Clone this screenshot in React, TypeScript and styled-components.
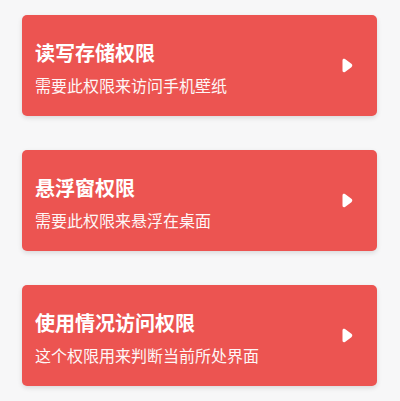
import styled, { createGlobalStyle } from "styled-components";

const GlobalStyle = createGlobalStyle`
    html, body {
        margin: 0;
        padding: 0;
        background: #f7f7f8;
        font-family: "Noto Sans CJK SC", "Noto Sans", sans-serif;
    }
`;

const Page = styled.div`
    width: 400px;
    min-height: 401px;
    box-sizing: border-box;
    padding: 15px 23px 0 22px;
    display: flex;
    flex-direction: column;
    gap: 34px;
`;

const Card = styled.div`
    height: 101px;
    box-sizing: border-box;
    background: #ec5451;
    border-radius: 5px;
    box-shadow: 0 2px 5px rgba(0, 0, 0, 0.12);
    display: flex;
    align-items: center;
    padding: 0 24px 0 13px;
`;

const TextBlock = styled.div`
    flex: 1;
    display: flex;
    flex-direction: column;
    gap: 10px;
    padding-top: 4px;
`;

const Title = styled.div`
    color: #fff;
    font-size: 20px;
    font-weight: 700;
    line-height: 24px;
`;

const SubTitle = styled.div`
    color: #fff;
    font-size: 16px;
    line-height: 20px;
    opacity: 0.95;
`;

const PlayIcon = () => (
    <svg width="11" height="15" viewBox="0 0 11 15">
        <path
            d="M3 1 C1.6 0.2 0.5 0.9 0.5 2.4 V12.6 C0.5 14.1 1.6 14.8 3 14 L9.4 9.2 C10.6 8.3 10.6 6.7 9.4 5.8 Z"
            fill="#fff"
        />
    </svg>
);

const items = [
    { id: "1", title: "读写存储权限", desc: "需要此权限来访问手机壁纸" },
    { id: "2", title: "悬浮窗权限", desc: "需要此权限来悬浮在桌面" },
    { id: "3", title: "使用情况访问权限", desc: "这个权限用来判断当前所处界面" },
];

export default function App() {
    return (
        <>
            <GlobalStyle />
            <Page>
                {items.map(item => (
                    <Card key={item.id}>
                        <TextBlock>
                            <Title>{item.title}</Title>
                            <SubTitle>{item.desc}</SubTitle>
                        </TextBlock>
                        <PlayIcon />
                    </Card>
                ))}
            </Page>
        </>
    );
}
